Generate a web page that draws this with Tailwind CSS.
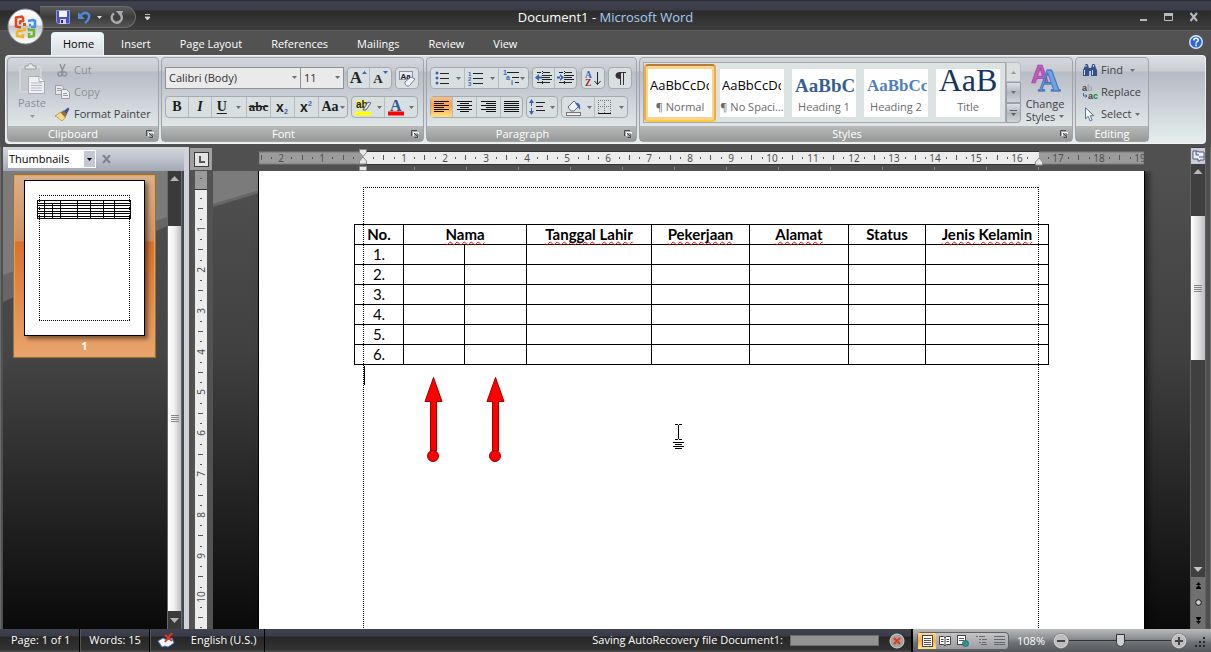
<!DOCTYPE html>
<html lang="en">
<head>
<meta charset="utf-8">
<title>Document1 - Microsoft Word</title>
<script src="https://cdn.jsdelivr.net/npm/@tailwindcss/browser@4"></script>
</head>
<body class="flex h-screen flex-col overflow-hidden bg-[#505050] font-['Open_Sans',sans-serif] text-[11px] leading-4 text-[#3f3f46]">

<svg class="hidden">
  <defs>
    <symbol id="down" viewBox="0 0 5 3"><path d="M0 0h5L2.500 3z" fill="#6d7076"/></symbol>
    <symbol id="launch" viewBox="0 0 8 8"><path d="M.5 6V.5H6" fill="none" stroke="#4a4c55"/><path d="M2.500 6V2.500H7.500V7.500H6" fill="none" stroke="#fff"/><path d="M3 3l4 4M7 4v3.500H3.500" fill="none" stroke="#4a4c55"/></symbol>
  </defs>
</svg>

<header class="relative shrink-0">
  <div class="grid h-[31px] grid-cols-[1fr_auto_1fr] items-center border-b border-[#5c5c5c] bg-[linear-gradient(#26272b,#40434f_2px,#3a3d48_10px,#2b2b2b_11px,#3e3e3e)]">
    <div class="flex items-center gap-2 pt-1 pl-10">
      <div class="flex h-[22px] w-24 items-center gap-2 rounded-r-full border border-l-0 border-[#6d6d6d] bg-[linear-gradient(#5a5a5a,#3c3c3c_50%,#555)] pl-4">
        <button aria-label="Save"><svg width="14" height="14" viewBox="0 0 14 14"><path d="M.5.5h13v13H2L.5 12z" fill="#4a50b8" stroke="#8f95e6"/><rect x="3" y="1" width="8" height="6" fill="#f0f3ff"/><rect x="4" y="9" width="6" height="5" fill="#cdd2f2"/><rect x="5" y="10" width="2" height="3" fill="#222a70"/></svg></button>
        <button aria-label="Undo" class="flex items-center gap-1.5"><svg width="13" height="14" viewBox="0 0 13 14"><path d="M3 5C7 1 12 3 11 7.500 10.500 10 9 11.500 7 13" fill="none" stroke="#4f86d8" stroke-width="2.500"/><path d="M0 2v7h7z" fill="#4f86d8"/></svg><svg width="5" height="3"><path d="M0 0h5L2.500 3z" fill="#ddd"/></svg></button>
        <button aria-label="Repeat"><svg width="14" height="14" viewBox="0 0 14 14"><path d="M4 3.500A5 5 0 1 0 11 5" fill="none" stroke="#a9abb0" stroke-width="2.500"/><path d="M6 1h7l-2 6z" fill="#a9abb0"/></svg></button>
      </div>
      <button aria-label="Customize Quick Access Toolbar"><svg width="7" height="8"><path d="M1 1.500h5M1 4h5L3.500 7z" fill="#ddd" stroke="#ddd" stroke-width=".8"/></svg></button>
    </div>
    <h1 class="pt-1 text-[13px] text-white">Document1 - <span class="text-[#a6cdf5]">Microsoft Word</span></h1>
    <div class="flex items-center justify-end gap-4 pr-3 pt-1">
      <button aria-label="Minimize"><svg width="9" height="10"><rect x="1" y="7" width="7" height="2" fill="#b4bac6"/></svg></button>
      <button aria-label="Restore"><svg width="9" height="10"><path d="M.5 2.500h8v6h-8z" fill="none" stroke="#b4bac6"/><rect y="1" width="9" height="3" fill="#b4bac6"/></svg></button>
      <button aria-label="Close"><svg width="10" height="10"><path d="M1.500 1l6.500 8M8 1L1.500 9" stroke="#b4bac6" stroke-width="2"/></svg></button>
    </div>
  </div>
  <nav class="flex h-6 items-end gap-[5px] bg-[#525252] pr-2 pl-[51px] text-white">
    <a href="#" class="h-[23px] rounded-t border border-b-0 border-[#d8fbfb] bg-[linear-gradient(#f4f6f7,#d9dce0)] pt-[3px] pr-[9px] pl-[11px] text-black">Home</a>
    <a href="#" class="h-[23px] px-3 pt-1">Insert</a>
    <a href="#" class="h-[23px] px-3 pt-1">Page Layout</a>
    <a href="#" class="h-[23px] px-3 pt-1">References</a>
    <a href="#" class="h-[23px] px-3 pt-1">Mailings</a>
    <a href="#" class="h-[23px] px-3 pt-1">Review</a>
    <a href="#" class="h-[23px] px-3 pt-1">View</a>
    <button aria-label="Help" class="mb-1.5 ml-auto"><svg width="14" height="14"><circle cx="7" cy="7" r="6.300" fill="#2d66dd" stroke="#d7e8ff" stroke-width="1.400"/><path d="M4.800 5.500C4.800 2.500 9.500 2.700 9.200 5.300 9 6.800 7 6.500 7 8.500" fill="none" stroke="#fff" stroke-width="1.600"/><rect x="6.200" y="9.500" width="1.700" height="1.700" fill="#fff"/></svg></button>
  </nav>
  <button aria-label="Office Button" class="absolute top-2 left-[7px]">
    <svg width="37" height="37" viewBox="0 0 37 37">
      <defs><linearGradient id="orb" x2="0" y2="1"><stop stop-color="#fff"/><stop offset=".45" stop-color="#ececee"/><stop offset=".5" stop-color="#c3c5c9"/><stop offset="1" stop-color="#fff"/></linearGradient></defs>
      <circle cx="18.500" cy="18.500" r="17.500" fill="url(#orb)" stroke="#85878c"/>
      <g fill="none" stroke-width="2.600" stroke-linejoin="round">
        <path d="M16 8.500l-7 1v9l5 1M16 8.500v4.500l-3 .5v3" stroke="#dc4a1c"/>
        <path d="M21 13l5-1 2 1v6h-4M22 17h2" stroke="#3f93dd"/>
        <path d="M10 23h6M10 23v5l6 1v-3" stroke="#f2b41e"/>
        <path d="M21 22h6v6l-5 1v-4" stroke="#72b43a"/>
      </g>
      <rect x="16" y="15" width="3" height="3" fill="#e0571f"/><rect x="16" y="20" width="3" height="3" fill="#f2b41e"/><rect x="20.500" y="20" width="2" height="2" fill="#72b43a"/>
    </svg>
  </button>
</header>

<section aria-label="Ribbon" class="mx-[5px] mb-[3px] flex h-[89px] shrink-0 gap-0.5 rounded border border-[#eef0f2] border-b-[#f4f4f4] bg-[linear-gradient(#dde0e3,#c9cdd4_15px,#b5bac4_16px,#e4edec_85px)] p-px">

  <!-- Clipboard -->
  <section class="flex w-[152px] flex-col rounded border border-[#a0a4aa] bg-[linear-gradient(#d4d7db,#c6cad1_13px,#b7bcc6_14px,#dfe6e7_68px)]">
    <div class="flex flex-1 gap-1.5 pt-px pl-[7px] text-[#8d9096]">
      <button class="flex w-[34px] flex-col items-center pt-1">
        <svg width="28" height="32" viewBox="0 0 28 32"><rect x="2" y="4" width="21" height="25" rx="1" fill="#c5c9ce" stroke="#dfe2e5"/><path d="M7 6V3h3c0-3 5-3 5 0h3v3z" fill="#e8eaec" stroke="#9a9da3"/><path d="M10.500 13.500h11l5 5v12h-16z" fill="#eef0f4" stroke="#a9adb5"/><path d="M21 13.500v5h5.500" fill="#fff" stroke="#a9adb5"/><path d="M13 20h11M13 22.500h11M13 25h11M13 27.500h11" stroke="#b5b9c2"/></svg>
        <span>Paste</span>
        <svg width="5" height="3" class="mt-1"><use href="#down" opacity=".6"/></svg>
      </button>
      <div class="flex flex-col">
        <button class="flex h-[22px] items-center gap-1"><svg width="15" height="14" viewBox="0 0 15 14"><path d="M5 1l3 8M10 1L6.500 9" stroke="#8f939b" stroke-width="1.500"/><circle cx="5" cy="11" r="2" fill="none" stroke="#8f939b" stroke-width="1.500"/><circle cx="9.500" cy="11" r="2" fill="none" stroke="#8f939b" stroke-width="1.500"/></svg>Cut</button>
        <button class="flex h-[22px] items-center gap-1"><svg width="15" height="14" viewBox="0 0 15 14"><path d="M.5.5h6l2 2v7h-8z" fill="#e6e8ea" stroke="#989ca3"/><path d="M6.500 4.500h5l3 3v6h-8z" fill="#f0f1f3" stroke="#989ca3"/><path d="M2 3.500h4M2 5.500h4M8 8.500h4M8 10.500h5" stroke="#989ca3"/></svg>Copy</button>
        <button class="flex h-[22px] items-center gap-1 text-[#3f3f46]"><svg width="15" height="14" viewBox="0 0 15 14"><path d="M0 9l6-4 5 5-4 4C5 13 3 10 0 9z" fill="#f5dc83" stroke="#a98a3a" stroke-width=".7"/><path d="M5.500 5.500L9 3l3.500 3.500-2.500 4z" fill="#8f6f50"/><path d="M9 4l4-3.500 1.500 1.500L11.500 7z" fill="#41518f"/></svg>Format Painter</button>
      </div>
    </div>
    <h2 class="flex h-[15px] items-center bg-[linear-gradient(#b8baba,#979998)] pr-1 text-white"><span class="flex-1 pr-2 text-center">Clipboard</span><button aria-label="Clipboard options"><svg width="8" height="8"><use href="#launch"/></svg></button></h2>
  </section>

  <!-- Font -->
  <section class="flex w-[263px] flex-col rounded border border-[#a0a4aa] bg-[linear-gradient(#d4d7db,#c6cad1_13px,#b7bcc6_14px,#dfe6e7_68px)]">
    <div class="flex flex-1 flex-col gap-[7px] px-[3px] pt-[9px]">
      <div class="flex gap-[3px]">
        <div class="flex h-[22px]">
          <label class="relative w-[136px]"><select aria-label="Font" class="h-full w-full appearance-none border border-[#8e9196] bg-[#eaeaea] px-[3px] text-[#303030]"><option>Calibri (Body)</option></select><svg width="5" height="3" class="absolute top-[9px] right-1"><use href="#down"/></svg></label>
          <label class="relative w-[43px]"><select aria-label="Font size" class="h-full w-full appearance-none border border-l-0 border-[#8e9196] bg-[#eaeaea] px-[3px] text-[#303030]"><option>11</option></select><svg width="5" height="3" class="absolute top-[9px] right-1"><use href="#down"/></svg></label>
        </div>
        <div class="flex h-[22px] divide-x divide-[#b6bcc0] rounded-sm border border-[#a5aab0] bg-[#d7dfe0] font-['Liberation_Serif',serif] font-bold text-[#222]">
          <button aria-label="Grow font" class="flex w-[22px] justify-center text-[17px] leading-5">A<svg width="5" height="3" class="mt-[3px]"><path d="M0 3h5L2.500 0z" fill="#3c62b4"/></svg></button>
          <button aria-label="Shrink font" class="flex w-[21px] justify-center text-[13px] leading-[22px]">A<svg width="5" height="3" class="mt-[3px]"><path d="M0 0h5L2.500 3z" fill="#3c62b4"/></svg></button>
        </div>
        <button aria-label="Clear formatting" class="flex h-[22px] w-6 items-center justify-center rounded-sm border border-[#a5aab0] bg-[#d7dfe0]"><svg width="17" height="17" viewBox="0 0 17 17"><rect x=".5" y="1.500" width="13" height="8" fill="#e8ecf2" stroke="#8a93a5"/><text x="1.500" y="8.500" font-size="8" font-weight="bold" font-family="Liberation Sans" fill="#222">Aa</text><path d="M6 12l6-5 4 2-5.500 6.500c-2 1.500-5-.5-4.500-3.500z" fill="#f4f4fb" stroke="#6d7fa8"/></svg></button>
      </div>
      <div class="flex gap-[3px] font-['Liberation_Serif',serif] font-bold text-[#1c1c1c]">
        <div class="flex h-[22px] divide-x divide-[#b6bcc0] rounded-sm border border-[#a5aab0] bg-[#d7dfe0] text-[14px]">
          <button aria-label="Bold" class="w-[23px]">B</button>
          <button aria-label="Italic" class="w-[23px] italic">I</button>
          <button aria-label="Underline" class="flex w-[35px] items-center justify-around"><span class="underline underline-offset-2">U</span><svg width="5" height="3"><use href="#down"/></svg></button>
          <button aria-label="Strikethrough" class="w-6 text-[13px] line-through">abc</button>
          <button aria-label="Subscript" class="flex w-6 items-center justify-center font-['Liberation_Sans',sans-serif]">x<svg width="5" height="7" class="mt-2"><text y="6" font-size="7" fill="#3c62b4">2</text></svg></button>
          <button aria-label="Superscript" class="flex w-6 items-center justify-center font-['Liberation_Sans',sans-serif]">x<svg width="5" height="7" class="mb-2"><text y="6" font-size="7" fill="#3c62b4">2</text></svg></button>
          <button aria-label="Change case" class="flex w-7 items-center justify-center gap-px">Aa<svg width="5" height="3"><use href="#down"/></svg></button>
        </div>
        <div class="flex h-[22px] divide-x divide-[#b6bcc0] rounded-sm border border-[#a5aab0] bg-[#d7dfe0]">
          <button aria-label="Highlight" class="flex w-[33px] items-center justify-around"><svg width="17" height="17" viewBox="0 0 17 17"><rect x="1" y="1" width="10" height="9" fill="#f3f06a"/><text x="1" y="9" font-size="10" font-family="Liberation Sans" fill="#222">ab</text><path d="M8 11l5-8 3 1-5 7z" fill="#dfe4f0" stroke="#51648f"/><rect y="12.500" width="16" height="4" fill="#ff0"/></svg><svg width="5" height="3"><use href="#down"/></svg></button>
          <button aria-label="Font colour" class="flex w-8 items-center justify-around"><svg width="16" height="17" viewBox="0 0 16 17"><text x="2" y="11.500" font-size="16" font-weight="bold" font-family="Liberation Serif" fill="#34548f">A</text><rect y="12.500" width="16" height="4" fill="#f00"/></svg><svg width="5" height="3"><use href="#down"/></svg></button>
        </div>
      </div>
    </div>
    <h2 class="flex h-[15px] items-center bg-[linear-gradient(#b8baba,#979998)] pr-1 text-white"><span class="flex-1 pr-1.5 text-center">Font</span><button aria-label="Font options"><svg width="8" height="8"><use href="#launch"/></svg></button></h2>
  </section>

  <!-- Paragraph -->
  <section class="flex w-[211px] flex-col rounded border border-[#a0a4aa] bg-[linear-gradient(#d4d7db,#c6cad1_13px,#b7bcc6_14px,#dfe6e7_68px)]">
    <div class="flex flex-1 flex-col gap-[7px] px-[3px] pt-[9px]">
      <div class="flex gap-[3px]">
        <div class="flex h-[22px] divide-x divide-[#b6bcc0] rounded-sm border border-[#a5aab0] bg-[#d7dfe0]">
          <button aria-label="Bullets" class="flex w-[34px] items-center justify-around"><svg width="14" height="14"><g fill="#3c62b4"><circle cx="2" cy="2" r="1.500"/><circle cx="2" cy="7" r="1.500"/><circle cx="2" cy="12" r="1.500"/></g><path d="M5 2.500h9M5 7.500h9M5 12.500h9" stroke="#222"/></svg><svg width="5" height="3"><use href="#down"/></svg></button>
          <button aria-label="Numbering" class="flex w-[34px] items-center justify-around"><svg width="15" height="15"><g fill="#3c62b4" font-size="6" font-weight="bold" font-family="Liberation Sans"><text y="4.500">1</text><text y="9.500">2</text><text y="14.500">3</text></g><path d="M5 2.500h10M5 7.500h10M5 12.500h10" stroke="#222"/></svg><svg width="5" height="3"><use href="#down"/></svg></button>
          <button aria-label="Multilevel list" class="flex w-[29px] items-center justify-center"><svg width="18" height="16"><g fill="#3c62b4" font-size="7" font-weight="bold" font-family="Liberation Sans"><text x="1" y="5">1</text><text x="4" y="10">a</text><text x="9" y="15">i</text></g><path d="M5 2.500h12M10 7.500h7M13 12.500h4" stroke="#222"/></svg><svg width="5" height="3"><use href="#down"/></svg></button>
        </div>
        <div class="flex h-[22px] divide-x divide-[#b6bcc0] rounded-sm border border-[#a5aab0] bg-[#d7dfe0]">
          <button aria-label="Decrease indent" class="flex w-[22px] items-center justify-center"><svg width="17" height="15"><path d="M2 1.500h4M8 1.500h7M8 4.500h9M8 6.500h7M8 8.500h9M2 11.500h13" stroke="#222"/><path d="M7.500 0v14" stroke="#222" stroke-dasharray="1 1"/><path d="M0 6.500L4 3v7zM3 5.500h4v2H3z" fill="#3c62b4"/></svg></button>
          <button aria-label="Increase indent" class="flex w-[21px] items-center justify-center"><svg width="17" height="15"><path d="M2 1.500h4M8 1.500h7M8 4.500h9M8 6.500h7M8 8.500h9M2 11.500h13" stroke="#222"/><path d="M7.500 0v14" stroke="#222" stroke-dasharray="1 1"/><path d="M7 6.500L3 3v7zM0 5.500h4v2H0z" fill="#3c62b4"/></svg></button>
        </div>
        <button aria-label="Sort" class="ml-px flex h-[22px] w-6 items-center justify-center rounded-sm border border-[#a5aab0] bg-[#d7dfe0]"><svg width="16" height="17"><g font-size="9.500" font-weight="bold" font-family="Liberation Serif"><text y="8" fill="#3c62b4">A</text><text y="16" fill="#a02c2c">Z</text></g><path d="M12.500 2v12M9.500 11l3 3.500 3-3.500" fill="none" stroke="#222"/></svg></button>
        <button aria-label="Show formatting marks" class="flex h-[22px] w-6 items-center justify-center rounded-sm border border-[#a5aab0] bg-[#d7dfe0]"><svg width="11" height="13"><path d="M5 0h6v1H5zM5 0C-1 0-1 7 5 7zM5 0h1v13H5zM8 0h1v13H8z" fill="#333"/></svg></button>
      </div>
      <div class="flex gap-[3px]">
        <div class="flex h-[22px] divide-x divide-[#b6bcc0] rounded-sm border border-[#a5aab0] bg-[#d7dfe0]">
          <button aria-label="Align left" class="flex w-[22px] items-center justify-center bg-[linear-gradient(#f7c187,#fb9e45_40%,#fde288)]"><svg width="15" height="12"><path d="M0 .5h15M0 2.500h10M0 4.500h15M0 6.500h10M0 8.500h15M0 10.500h10" stroke="#111"/></svg></button>
          <button aria-label="Center" class="flex w-6 items-center justify-center"><svg width="15" height="12"><path d="M0 .5h15M3 2.500h9M0 4.500h15M3 6.500h9M0 8.500h15M3 10.500h9" stroke="#111"/></svg></button>
          <button aria-label="Align right" class="flex w-6 items-center justify-center"><svg width="15" height="12"><path d="M0 .5h15M5 2.500h10M0 4.500h15M5 6.500h10M0 8.500h15M5 10.500h10" stroke="#111"/></svg></button>
          <button aria-label="Justify" class="flex w-[21px] items-center justify-center"><svg width="15" height="12"><path d="M0 .5h15M0 2.500h15M0 4.500h15M0 6.500h15M0 8.500h15M0 10.500h15" stroke="#111"/></svg></button>
        </div>
        <button aria-label="Line spacing" class="flex h-[22px] w-8 items-center justify-around rounded-sm border border-[#a5aab0] bg-[#d7dfe0]"><svg width="16" height="16"><path d="M0 4l2.500-4L5 4zM0 12l2.500 4L5 12zM2 4h1v3H2zM2 9h1v3H2z" fill="#3c62b4"/><path d="M7 3.500h9M7 7.500h7M7 11.500h9" stroke="#222"/></svg><svg width="5" height="3"><use href="#down"/></svg></button>
        <div class="flex h-[22px] divide-x divide-[#b6bcc0] rounded-sm border border-[#a5aab0] bg-[#d7dfe0]">
          <button aria-label="Shading" class="flex w-[33px] items-center justify-around"><svg width="17" height="17"><path d="M3 8l6-6 5 5-5 5H6z" fill="#f0f3f8" stroke="#5d6a80"/><path d="M10 4c4-1 6 2 5 7l-2-3z" fill="#3c62b4"/><rect x="1.500" y="13.500" width="14" height="3" fill="#eee" stroke="#777"/></svg><svg width="5" height="3"><use href="#down"/></svg></button>
          <button aria-label="Borders" class="flex w-8 items-center justify-around"><svg width="14" height="15"><path d="M0 .5h13M0 6.500h13M.5 0v13M6.500 0v13M12.500 0v13" stroke="#777" stroke-dasharray="1 1"/><path d="M0 13.500h13" stroke="#111"/></svg><svg width="5" height="3"><use href="#down"/></svg></button>
        </div>
      </div>
    </div>
    <h2 class="flex h-[15px] items-center bg-[linear-gradient(#b8baba,#979998)] pr-1 text-white"><span class="flex-1 pr-1.5 text-center">Paragraph</span><button aria-label="Paragraph options"><svg width="8" height="8"><use href="#launch"/></svg></button></h2>
  </section>

  <!-- Styles -->
  <section class="flex w-[434px] flex-col rounded border border-[#a0a4aa] bg-[linear-gradient(#d4d7db,#c6cad1_13px,#b7bcc6_14px,#dfe6e7_68px)]">
    <div class="flex flex-1 items-start px-[3px] pt-1">
      <div class="flex h-[61px] w-[363px] items-center border border-[#a5a8ac] bg-[#dbe4e2] text-center text-[#6a6a6a]">
        <button class="flex h-[58px] w-[72px] items-center justify-center rounded-sm border-2 border-[#f5a742] border-t-[#b97b3c] border-b-[#ffc93c] bg-[#fbd58c]"><span class="flex h-12 w-16 flex-col justify-between overflow-hidden bg-white pt-2 pb-0.5"><span class="ml-0.5 w-[59px] overflow-hidden text-[13px] leading-4 text-black">AaBbCcDc</span><span>¶ Normal</span></span></button>
        <button class="ml-1 flex h-12 w-16 flex-col justify-between bg-white pt-2 pb-0.5"><span class="ml-0.5 w-[59px] overflow-hidden text-[13px] leading-4 text-black">AaBbCcDc</span><span class="w-full whitespace-nowrap">¶ No Spaci...</span></button>
        <button class="ml-2 flex h-12 w-16 flex-col justify-between bg-white pt-2 pb-0.5"><span class="ml-[3px] w-[59px] overflow-hidden font-['Liberation_Serif',serif] text-[19px] leading-[18px] font-bold text-[#365f91]">AaBbCc</span><span class="w-full">Heading 1</span></button>
        <button class="ml-2 flex h-12 w-16 flex-col justify-between bg-white pt-2 pb-0.5"><span class="ml-[3px] w-[60px] overflow-hidden font-['Liberation_Serif',serif] text-[17px] leading-[18px] font-bold text-[#4f81bd]">AaBbCc</span><span class="w-full">Heading 2</span></button>
        <button class="ml-2 flex h-12 w-16 flex-col justify-between bg-white pt-px pb-0.5"><span class="h-6 w-full overflow-hidden font-['Liberation_Serif',serif] text-[32px] leading-5 text-[#17365d]">AaB</span><span class="w-full">Title</span></button>
      </div>
      <div class="flex h-[61px] w-[15px] flex-col">
        <button aria-label="Scroll styles up" class="flex flex-1 items-center justify-center rounded-tr-sm border border-[#b9bdc3] bg-[#dcdfe2]"><svg width="5" height="3"><path d="M0 3h5L2.500 0z" fill="#999"/></svg></button>
        <button aria-label="Scroll styles down" class="flex flex-1 items-center justify-center border border-[#9b9fa6] bg-[linear-gradient(#dcdfe2,#b3b8bf_50%,#d0d4d8)]"><svg width="5" height="3"><use href="#down"/></svg></button>
        <button aria-label="More styles" class="flex flex-1 items-center justify-center rounded-br-sm border border-[#9b9fa6] bg-[linear-gradient(#dcdfe2,#b3b8bf_50%,#d0d4d8)]"><svg width="7" height="6"><path d="M0 .5h7" stroke="#5d6068"/><path d="M1 3h5L3.500 6z" fill="#5d6068"/></svg></button>
      </div>
      <button class="flex flex-1 flex-col items-center leading-[13px]">
        <svg width="32" height="32" viewBox="0 0 32 32" class="mb-[3px]"><g font-family="Liberation Serif" font-weight="bold"><text x="2" y="21" font-size="25" font-family="Liberation Sans" fill="#c556c0" stroke="#8d3f94" stroke-width=".6">A</text><text x="9" y="29" font-size="31" fill="#6ea4e6" stroke="#3868b4" stroke-width=".8">A</text></g></svg>
        <span>Change</span>
        <span class="flex items-center gap-1">Styles<svg width="5" height="3"><use href="#down"/></svg></span>
      </button>
    </div>
    <h2 class="flex h-[15px] items-center bg-[linear-gradient(#b8baba,#979998)] pr-1 text-white"><span class="flex-1 pr-1.5 text-center">Styles</span><button aria-label="Styles options"><svg width="8" height="8"><use href="#launch"/></svg></button></h2>
  </section>

  <!-- Editing -->
  <section class="flex w-[74px] flex-col rounded border border-[#a0a4aa] bg-[linear-gradient(#d4d7db,#c6cad1_13px,#b7bcc6_14px,#dfe6e7_68px)]">
    <div class="flex flex-1 flex-col pt-px pl-1.5">
      <button class="flex h-[22px] items-center gap-[3px]"><svg width="16" height="14" viewBox="0 0 16 14"><path d="M2 5l1.500-4h2L7 5v8H1V7zM9 5l1.500-4h2L14 5l1 2v6H9z" fill="#34508c"/><path d="M6 5h4v3H6z" fill="#34508c"/><path d="M2.500 7v5M10.500 7v5M4 2v2M11.500 2v2" stroke="#cfdcf5"/></svg>Find<svg width="5" height="3" class="ml-1"><use href="#down"/></svg></button>
      <button class="flex h-[22px] items-center gap-[3px]"><svg width="16" height="16" viewBox="0 0 16 16"><g font-size="9" font-weight="bold" font-family="Liberation Sans"><text y="7" fill="#444">a</text><text x="5" y="7" fill="#a5a8ae">b</text><text x="6" y="15" fill="#444">a</text><text x="11" y="15" fill="#118a1f">c</text></g><path d="M1.500 9v3h3M3.500 10.500L5 12l-1.500 1.500" fill="none" stroke="#3c62b4"/></svg>Replace</button>
      <button class="flex h-[22px] items-center gap-[3px]"><svg width="16" height="15" viewBox="0 0 16 15"><path d="M3.500.8v11l2.700-2.500 2 4.700 2-1-2-4.300h3.600z" fill="#fff" stroke="#54709f"/></svg>Select<svg width="5" height="3" class="ml-px"><use href="#down"/></svg></button>
    </div>
    <h2 class="h-[15px] bg-[linear-gradient(#b8baba,#979998)] text-center leading-[15px] text-white">Editing</h2>
  </section>
</section>

<main class="flex min-h-0 flex-1 border-x border-[#6b6b6b]">
  <!-- Thumbnails pane -->
  <aside class="ml-0.5 flex w-[181px] shrink-0 flex-col">
    <div class="flex h-6 items-center gap-1.5 bg-[linear-gradient(#d3d6dc,#b8bdc7_60%,#a1a8b4)] pl-[5px]">
      <label class="relative w-[88px]"><select aria-label="Pane" class="h-[18px] w-full appearance-none border border-white bg-white text-[11px] leading-4 text-black"><option>Thumbnails</option></select><span class="pointer-events-none absolute top-px right-px flex h-4 w-[11px] items-center justify-center bg-[#c3c9d3]"><svg width="5" height="3"><path d="M0 0h5L2.500 3z"/></svg></span></label>
      <button aria-label="Close pane"><svg width="9" height="9"><path d="M1 0l7 8M8 0L1 8" stroke="#7d828c" stroke-width="2"/></svg></button>
    </div>
    <div class="flex min-h-0 flex-1 bg-[linear-gradient(#505050,#454545_40%,#0a0a0a)]">
      <div class="relative min-w-0 flex-1 overflow-hidden">
        <svg class="absolute inset-0" width="164" height="140"><path d="M0 0h164v55L0 131z" fill="#666"/><path d="M0 0h164v46L0 104z" fill="#7b7b7b"/></svg>
        <figure class="relative mt-[3px] ml-2.5 flex h-[184px] w-[143px] flex-col items-center border border-[#8b7350] bg-[linear-gradient(#dcb089,#cd8f63_36%,#d8722e_37%,#e8a56e)] pt-[5px] shadow-[inset_0_0_0_1px_#f0a040]">
          <div class="h-[156px] w-[121px] border border-black bg-white px-3 pt-3.5 shadow-[3px_3px_4px_rgba(0,0,0,.45)]">
            <svg width="95" height="128" viewBox="0 0 95 128"><path d="M2 .5h91M2 125.500h91M2.500 0v126M92.500 0v126" fill="none" stroke="#000" stroke-dasharray="1 1"/><path d="M0 5.500h94M0 8.500h94M0 10.500h94M0 13.500h94M0 16.500h94M0 18.500h94M0 21.500h94M0 23.500h94M.5 5v19M7.500 5v19M15.500 8v16M23.500 5v19M40.500 5v19M53.500 5v19M66.500 5v19M77.500 5v19M93.500 5v19" fill="none" stroke="#000"/></svg>
          </div>
          <figcaption class="mt-0.5 font-bold text-white">1</figcaption>
        </figure>
      </div>
      <div class="flex w-[15px] flex-col items-center border-x border-[#6a6a6a] bg-[#3a3a3a]">
        <svg width="9" height="55" class="shrink-0"><path d="M0 10h9L4.500 5z" fill="#b5b5b5"/></svg>
        <div class="flex w-full flex-1 flex-col items-center justify-center gap-px bg-[linear-gradient(90deg,#fff,#eee_50%,#bdbdc2)]"><i class="h-px w-2 bg-[#888]"></i><i class="h-px w-2 bg-[#888]"></i><i class="h-px w-2 bg-[#888]"></i><i class="h-px w-2 bg-[#888]"></i></div>
        <svg width="9" height="18" class="shrink-0"><path d="M0 7h9l-4.500 5z" fill="#b5b5b5"/></svg>
      </div>
      <div class="w-0.5 bg-[#45474f]"></div>
    </div>
  </aside>
  <div class="w-[5px] shrink-0 bg-[#cfd2da]"></div>

  <!-- Document area -->
  <div class="flex min-w-0 flex-1 flex-col">
    <div class="flex h-6 shrink-0">
      <div class="flex w-6 shrink-0 items-center justify-center border border-[#505050] bg-[#a0a19f]"><svg width="15" height="15"><rect x=".5" y=".5" width="14" height="14" fill="#e4e4e4" stroke="#3c3c3c"/><path d="M6 4v6h5" fill="none" stroke="#555" stroke-width="2"/></svg></div>
      <div class="flex min-w-0 flex-1 justify-center"><svg id="hruler" class="shrink-0" width="885" height="24" role="img" aria-label="Horizontal ruler"></svg></div>
    </div>
    <div class="flex min-h-0 flex-1">
      <div class="w-6 shrink-0 overflow-hidden bg-[#525252]"><svg id="vruler" width="24" height="1200" role="img" aria-label="Vertical ruler"></svg></div>
      <div class="relative flex min-w-0 flex-1 justify-center overflow-hidden bg-[linear-gradient(#505050,#404040_40%,#0a0a0a)]">
        <svg class="absolute top-0 left-0" width="60" height="60"><path d="M0 0h60v18L0 36z" fill="#666"/><path d="M0 0h60v15L0 33z" fill="#7b7b7b"/></svg>
        <article class="relative w-[887px] shrink-0 border-x border-black bg-white pt-[53px] font-[Lato,sans-serif] text-[15px] text-black shadow-[4px_0_6px_rgba(0,0,0,.5)]">
          <table class="mx-auto w-[695px] table-fixed border-collapse text-center leading-[19px]">
            <colgroup><col class="w-[49px]"><col class="w-[61px]"><col class="w-[62px]"><col class="w-[125px]"><col class="w-[98px]"><col class="w-[99px]"><col class="w-[77px]"><col class="w-[123px]"></colgroup>
            <thead>
              <tr class="h-5 [&>th]:border [&>th]:border-black [&>th]:p-0 [&_span]:underline [&_span]:decoration-[#f00] [&_span]:decoration-wavy [&_span]:decoration-1 [&_span]:underline-offset-1 [&_span]:[text-decoration-skip-ink:none]"><th>No.</th><th colspan="2"><span>Nama</span></th><th><span>Tanggal</span> <span>Lahir</span></th><th><span>Pekerjaan</span></th><th><span>Alamat</span></th><th>Status</th><th><span>Jenis</span> <span>Kelamin</span></th></tr>
            </thead>
            <tbody class="[&_td]:border [&_td]:border-black [&_td]:p-0 [&_tr]:h-5">
              <tr><td>1.</td><td></td><td></td><td></td><td></td><td></td><td></td><td></td></tr>
              <tr><td>2.</td><td></td><td></td><td></td><td></td><td></td><td></td><td></td></tr>
              <tr><td>3.</td><td></td><td></td><td></td><td></td><td></td><td></td><td></td></tr>
              <tr><td>4.</td><td></td><td></td><td></td><td></td><td></td><td></td><td></td></tr>
              <tr><td>5.</td><td></td><td></td><td></td><td></td><td></td><td></td><td></td></tr>
              <tr><td>6.</td><td></td><td></td><td></td><td></td><td></td><td></td><td></td></tr>
            </tbody>
          </table>
          <!-- text boundary, caret, arrows and pointer float over the page -->
          <svg class="absolute top-0 left-px" width="883" height="1200">
            <path d="M103 16.500h676M103.500 16v1184M778.500 16v1184" stroke="#000" stroke-dasharray="1 1"/>
            <path d="M104.500 195v19" stroke="#000"/>
            <g fill="#f00" stroke="#900">
              <g id="arrow"><path d="M173.500 206.500l8.500 24h-5.500V280h-6v-49.500h-5.500z"/><circle cx="173" cy="285" r="5.500"/></g>
              <use href="#arrow" x="62"/>
            </g>
            <path d="M415 253.500h3M419 253.500h3M418.500 254v14M415 268.500h3M419 268.500h3M413 271.500h11M415 273.500h7M413 275.500h11M415 277.500h7" stroke="#000"/>
          </svg>
        </article>
      </div>
    </div>
  </div>

  <!-- Vertical scroll bar -->
  <div class="mr-1 flex w-4 shrink-0 flex-col border-x border-[#626262] bg-[#3f3f3f]">
    <button aria-label="Toggle ruler" class="mt-px flex h-4 shrink-0 items-center justify-center bg-[#c8cdd8]"><svg width="13" height="12"><path d="M1 1h4l2 1h5v8h-4v1H6V9H1zM4 1v4h3M7 7h5" fill="#eef1f7" stroke="#4c5870"/></svg></button>
    <svg width="14" height="52" class="shrink-0"><path d="M2.500 10h9L7 5z" fill="#b5b5b5"/></svg>
    <div class="flex h-36 w-full shrink-0 flex-col items-center justify-center gap-px bg-[linear-gradient(90deg,#fff,#e4e4e6_50%,#bdbdc2)]"><i class="h-px w-2 bg-[#888]"></i><i class="h-px w-2 bg-[#888]"></i><i class="h-px w-2 bg-[#888]"></i><i class="h-px w-2 bg-[#888]"></i></div>
    <svg width="14" height="18" class="mt-auto shrink-0"><path d="M2.500 8h9L7 13z" fill="#c5c5c5"/></svg>
    <div class="flex h-[52px] shrink-0 flex-col items-center justify-around bg-[#707070]">
      <button aria-label="Previous page"><svg width="5" height="7"><path d="M0 3h5L2.500 0zM0 6h5L2.500 3zM0 6h5v1H0z"/></svg></button>
      <button aria-label="Select browse object"><svg width="7" height="7"><circle cx="3.500" cy="3.500" r="2.800" fill="#ccc" stroke="#111"/></svg></button>
      <button aria-label="Next page"><svg width="5" height="7"><path d="M0 0h5v1H0zM0 1h5L2.500 4zM0 4h5L2.500 7z"/></svg></button>
    </div>
  </div>
</main>

<footer class="flex h-[23px] shrink-0 items-stretch bg-[linear-gradient(#40434f,#393c46_7px,#262626_8px,#333_21px,#555)] leading-[22px] text-white">
  <div class="border-r border-black pr-[9px] pl-[11px]">Page: 1 of 1</div>
  <div class="border-r border-l border-black border-l-[#555] px-2">Words: 15</div>
  <div class="flex items-start border-r border-l border-black border-l-[#555] pr-2 pl-1.5">
    <button aria-label="Proofing errors" class="mt-1 mr-4"><svg width="18" height="15" viewBox="0 0 18 15"><path d="M1 8l5-3 4 2 5-2 2 5-6 4-3-1-3 1z" fill="#f2f5fb" stroke="#4f74c4"/><path d="M8 2l7 6M15 0L8 9" stroke="#e23a22" stroke-width="2"/></svg></button>English (U.S.)
  </div>
  <label class="ml-auto pr-[7px]" for="save">Saving AutoRecovery file Document1:</label>
  <progress id="save" value="0" max="100" class="mt-1.5 h-[11px] w-[89px] appearance-none border border-[#6d6d6d] bg-[#929292] [&::-webkit-progress-bar]:bg-[#929292]"></progress>
  <button aria-label="Cancel saving" class="mr-1.5 ml-2.5"><svg width="16" height="16"><circle cx="8" cy="8" r="7" fill="#a2a2a4" stroke="#d5d5d5"/><path d="M5 5l6 6M11 5l-6 6" stroke="#e83a18" stroke-width="2.200"/></svg></button>
  <div class="flex items-center border-l-2 border-black bg-[linear-gradient(#b9b9bb,#8e9093_40%,#6c6f73_60%,#55595e)] pr-1 pl-1">
    <div class="flex h-[18px] w-[92px] rounded-sm border border-[#606060] bg-[linear-gradient(#c4c4c6,#9a9ca0)] [&>button]:flex [&>button]:flex-1 [&>button]:items-center [&>button]:justify-center">
      <button aria-label="Print Layout" class="bg-[linear-gradient(#fbd6a0,#fbb040_50%,#fde58f)]"><svg width="11" height="12"><rect x=".5" y=".5" width="10" height="11" fill="#fff" stroke="#444"/><path d="M2 3.500h7M2 5.500h7M2 7.500h7M2 9.500h7" stroke="#555"/></svg></button>
      <button aria-label="Full Screen Reading"><svg width="12" height="12"><path d="M.5 1.500h4l1.500 1 1.500-1h4v8h-4l-1.500 1.500-1.500-1.500h-4z" fill="#fff" stroke="#444"/><path d="M6 2v9M2 4.500h2.500M2 6.500h2.500M7.500 4.500H10M7.500 6.500H10" stroke="#444"/></svg></button>
      <button aria-label="Web Layout"><svg width="12" height="12"><rect x=".5" y=".5" width="8" height="9" fill="#fff" stroke="#444"/><path d="M2 3.500h5M2 5.500h5" stroke="#555"/><circle cx="8.500" cy="8.500" r="3" fill="#2c9c66" stroke="#2f62b4"/></svg></button>
      <button aria-label="Outline"><svg width="11" height="11"><path d="M0 1.500h2M3 1.500h6M3 4.500h2M6 4.500h5M3 7.500h2M6 7.500h4M5 9.500h6" stroke="#6a6a6c"/></svg></button>
      <button aria-label="Draft"><svg width="11" height="11"><path d="M0 1.500h11M0 4.500h11M0 7.500h11M0 9.500h11" stroke="#66676a"/></svg></button>
    </div>
    <span class="w-11 text-center">108%</span>
    <button aria-label="Zoom out"><svg width="16" height="16"><circle cx="8" cy="8" r="7" fill="#bdbdbf" stroke="#f0f0f0"/><circle cx="8" cy="8" r="7.500" fill="none" stroke="#666" stroke-width=".6"/><path d="M4 8h8" stroke="#444" stroke-width="2"/></svg></button>
    <input type="range" aria-label="Zoom" min="0" max="200" value="102" class="h-5 w-[102px] appearance-none bg-[linear-gradient(#333,#333)] bg-[length:100%_1px] bg-center bg-no-repeat [&::-webkit-slider-thumb]:h-[13px] [&::-webkit-slider-thumb]:w-[9px] [&::-webkit-slider-thumb]:appearance-none [&::-webkit-slider-thumb]:rounded-b-full [&::-webkit-slider-thumb]:border [&::-webkit-slider-thumb]:border-[#333] [&::-webkit-slider-thumb]:bg-[#d0d0d0]">
    <button aria-label="Zoom in"><svg width="16" height="16"><circle cx="8" cy="8" r="7" fill="#bdbdbf" stroke="#f0f0f0"/><circle cx="8" cy="8" r="7.500" fill="none" stroke="#666" stroke-width=".6"/><path d="M4 8h8M8 4v8" stroke="#444" stroke-width="2"/></svg></button>
    <svg width="12" height="12" class="mt-1 ml-2"><path d="M8 0h2v2H8zM4 4h2v2H4zM8 4h2v2H8zM0 8h2v2H0zM4 8h2v2H4zM8 8h2v2H8z" fill="#26282b"/></svg>
  </div>
</footer>

<script>
  // Rulers: one centimetre is CM pixels; numbers on whole centimetres, ticks between.
  const CM = 40.88;
  function marks(from, to, put) {
    for (let q = from * 4; q <= to * 4; q++) {
      if (q !== 0) put(Math.round(q * CM / 4), q % 4 === 0 ? Math.abs(q / 4) : null, Math.abs(q % 2) ? 2 : 5);
    }
  }
  let h = '<rect x="0" y="5" width="885" height="12" fill="#9b9b9b" stroke="#7a7a7a"/><rect x="104" y="5" width="676" height="12" fill="#ececec"/><path d="M104 4.500h676M104 17.500h676" stroke="#333"/>';
  marks(-3, 19, (p, n, len) => {
    const x = 104 + p;
    if (x < 2 || x > 886 || Math.abs(x - 780) < 8) return;
    h += n ? `<text x="${x}" y="15" text-anchor="middle" font-size="10" font-family="Noto Sans" fill="#505050">${n}</text>`
           : `<rect x="${x}" y="${11 - len / 2 | 0}" width="1" height="${len}" fill="#555"/>`;
  });
  for (let x = 155; x < 780; x += 52) h += `<rect x="${x}" y="20" width="1" height="3" fill="#8a8a8a"/>`;
  h += '<path d="M100.500 2.500h7v3l-3.500 4-3.500-4zM104 10l3.500 4v3h-7v-3zM100.500 19.500h7v4h-7zM780 11l3.500 4v3h-7v-3z" fill="#e6e6e6" stroke="#8b8b8b"/>';
  document.getElementById('hruler').innerHTML = h;

  let v = '<rect x="6" y="0" width="12" height="18" fill="#9b9b9b"/><rect x="6" y="19" width="12" height="1200" fill="#ececec"/><path d="M6 18.500h12" stroke="#333"/><rect x="11" y="7" width="2" height="1" fill="#555"/>';
  marks(0, 24, (p, n, len) => {
    const y = 17 + p;
    v += n ? `<text transform="translate(16 ${y}) rotate(-90)" text-anchor="middle" font-size="10" font-family="Noto Sans" fill="#505050">${n}</text>`
           : `<rect x="${12 - len / 2 | 0}" y="${y}" width="${len}" height="1" fill="#555"/>`;
  });
  document.getElementById('vruler').innerHTML = v;
</script>
</body>
</html>
